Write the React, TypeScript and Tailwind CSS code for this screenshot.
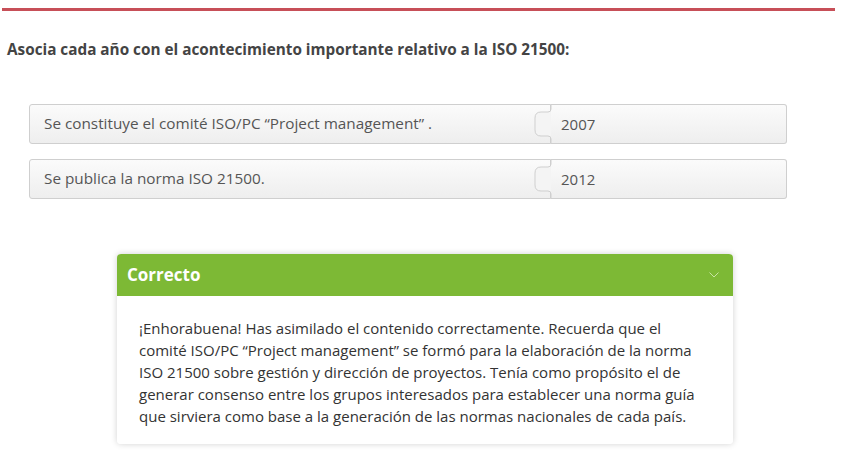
import React from "react";

const rows = [
  { text: "Se constituye el comité ISO/PC “Project management” .", year: "2007" },
  { text: "Se publica la norma ISO 21500.", year: "2012" },
];

function Joint() {
  return (
    <svg
      className="absolute left-[-19px] top-[-1px]"
      width="22"
      height="40"
      viewBox="0 0 22 40"
    >
      <path
        d="M19 0 L19 5 Q19 8 16 8 L9 8 Q3 8 3 14 L3 26 Q3 32 9 32 L16 32 Q19 32 19 35 L19 40"
        fill="#f4f4f4"
        stroke="#cfcfcf"
        strokeWidth="1"
      />
    </svg>
  );
}

export default function App() {
  return (
    <div className="w-[854px] h-[450px] bg-white font-['Open_Sans',sans-serif] overflow-hidden">
      <div className="pt-2 pl-[2px] pr-[19px]">
        <div className="h-[3px] bg-[#c74f58]" />
      </div>

      <h1 className="mt-[27px] pl-[7px] text-[15.3px] font-bold text-[#444]">
        Asocia cada año con el acontecimiento importante relativo a la ISO 21500:
      </h1>

      <div className="mt-[43px] pl-[29px] w-[787px] flex flex-col gap-[15px]">
        {rows.map((r) => (
          <div key={r.year} className="flex h-[40px]">
            <div className="flex-1 flex items-center pl-[14px] border border-[#cfcfcf] rounded-l-[3px] bg-gradient-to-b from-[#fbfbfb] to-[#eeeeee] text-[15.3px] text-[#555]">
              {r.text}
            </div>
            <div className="relative w-[236px] flex items-center pl-[10px] border border-l-0 border-[#cfcfcf] rounded-r-[3px] bg-gradient-to-b from-[#fbfbfb] to-[#eeeeee] text-[15px] text-[#555]">
              <Joint />
              {r.year}
            </div>
          </div>
        ))}
      </div>

      <div className="mt-[55px] ml-[117px] w-[616px] rounded-[4px] shadow-[0_0_6px_rgba(0,0,0,0.18)] overflow-hidden">
        <div className="h-[42px] bg-[#7db935] flex items-center justify-between pl-[10px] pr-[14px]">
          <span className="text-white font-bold text-[17px]">Correcto</span>
          <svg width="10" height="6" viewBox="0 0 10 6">
            <path d="M0.5 0.5 L5 5 L9.5 0.5" fill="none" stroke="#c8e3a4" strokeWidth="1" />
          </svg>
        </div>
        <div className="bg-white px-[22px] pt-[21px] pb-[17px] text-[15px] leading-[22px] text-[#333]">
          ¡Enhorabuena! Has asimilado el contenido correctamente. Recuerda que el comité ISO/PC
          “Project management” se formó para la elaboración de la norma ISO 21500 sobre gestión y
          dirección de proyectos. Tenía como propósito el de generar consenso entre los grupos
          interesados para establecer una norma guía que sirviera como base a la generación de las
          normas nacionales de cada país.
        </div>
      </div>
    </div>
  );
}
